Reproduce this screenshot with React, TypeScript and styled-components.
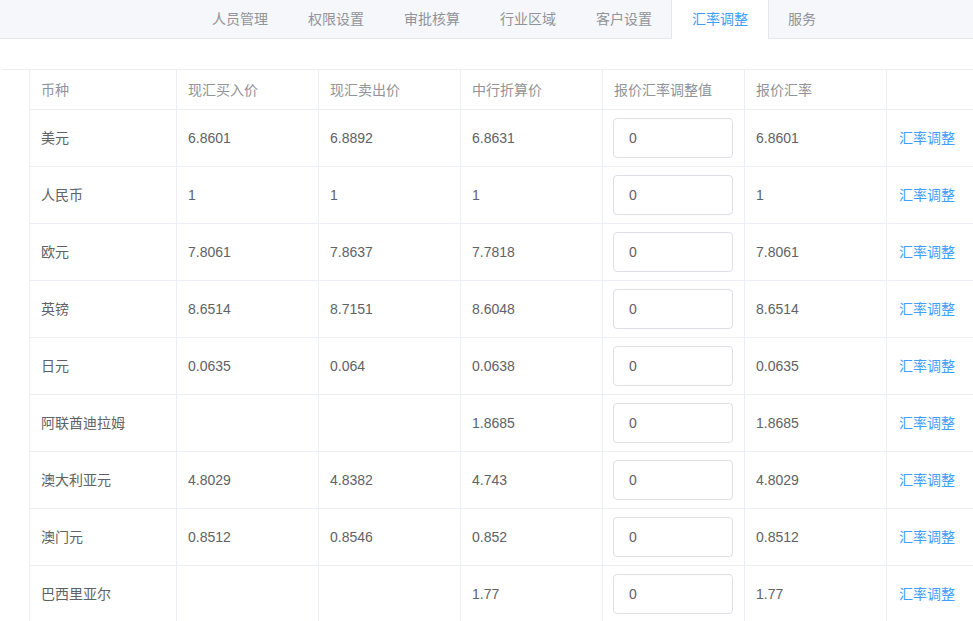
import React from 'react';
import styled, { createGlobalStyle } from 'styled-components';

type Rate = {
  name: string;
  buy: string;
  sell: string;
  middle: string;
  quote: string;
};

const tabs = ['人员管理', '权限设置', '审批核算', '行业区域', '客户设置', '汇率调整', '服务'];
const activeTab = '汇率调整';

const headers = ['币种', '现汇买入价', '现汇卖出价', '中行折算价', '报价汇率调整值', '报价汇率', ''];

const rates: Rate[] = [
  { name: '美元', buy: '6.8601', sell: '6.8892', middle: '6.8631', quote: '6.8601' },
  { name: '人民币', buy: '1', sell: '1', middle: '1', quote: '1' },
  { name: '欧元', buy: '7.8061', sell: '7.8637', middle: '7.7818', quote: '7.8061' },
  { name: '英镑', buy: '8.6514', sell: '8.7151', middle: '8.6048', quote: '8.6514' },
  { name: '日元', buy: '0.0635', sell: '0.064', middle: '0.0638', quote: '0.0635' },
  { name: '阿联酋迪拉姆', buy: '', sell: '', middle: '1.8685', quote: '1.8685' },
  { name: '澳大利亚元', buy: '4.8029', sell: '4.8382', middle: '4.743', quote: '4.8029' },
  { name: '澳门元', buy: '0.8512', sell: '0.8546', middle: '0.852', quote: '0.8512' },
  { name: '巴西里亚尔', buy: '', sell: '', middle: '1.77', quote: '1.77' },
];

const App = () => {
  function adjustRate(name: string) {
    console.log('adjust rate for', name);
  }

  return (
    <>
      <GlobalStyle />
      <Page>
        <TabBar>
          {tabs.map((tab) => (
            <Tab key={tab} $active={tab === activeTab}>
              {tab}
            </Tab>
          ))}
        </TabBar>
        <Content>
          <Table>
            <HeaderRow>
              {headers.map((h, i) => (
                <HeaderCell key={i}>{h}</HeaderCell>
              ))}
            </HeaderRow>
            {rates.map((r) => (
              <BodyRow key={r.name}>
                <Cell>{r.name}</Cell>
                <Cell>{r.buy}</Cell>
                <Cell>{r.sell}</Cell>
                <Cell>{r.middle}</Cell>
                <InputCell>
                  <RateInput defaultValue="0" />
                </InputCell>
                <Cell>{r.quote}</Cell>
                <Cell>
                  <LinkBtn onClick={() => adjustRate(r.name)}>汇率调整</LinkBtn>
                </Cell>
              </BodyRow>
            ))}
          </Table>
        </Content>
      </Page>
    </>
  );
};

const GlobalStyle = createGlobalStyle`
  html, body {
    margin: 0;
    padding: 0;
    background: #fff;
    overflow: hidden;
  }
  body {
    font-family: "Liberation Sans", "Noto Sans CJK SC", sans-serif;
    font-size: 14px;
    line-height: 20px;
  }
`;

const Page = styled.div`
  width: 973px;
  height: 621px;
  overflow: hidden;
`;

const TabBar = styled.div`
  display: flex;
  height: 38px;
  padding-left: 192px;
  background-color: #f5f7fa;
  border-bottom: 1px solid #e4e7ed;
`;

const Tab = styled.div<{ $active?: boolean }>`
  display: flex;
  align-items: center;
  height: ${(p) => (p.$active ? '39px' : '38px')};
  padding: ${(p) => (p.$active ? '0 20px 1px' : '0 20px')};
  font-size: 14px;
  color: ${(p) => (p.$active ? '#409eff' : '#909399')};
  background-color: ${(p) => (p.$active ? '#fff' : 'transparent')};
  border-left: ${(p) => (p.$active ? '1px solid #e4e7ed' : 'none')};
  border-right: ${(p) => (p.$active ? '1px solid #e4e7ed' : 'none')};
  margin: ${(p) => (p.$active ? '0 -1px' : '0')};
  box-sizing: border-box;
  white-space: nowrap;
  cursor: pointer;
`;

const Content = styled.div`
  margin-top: 30px;
  margin-left: 2px;
  border-top: 1px solid #ebeef5;
`;

const Table = styled.div`
  margin-left: 27px;
  width: 1000px;
`;

const HeaderRow = styled.div`
  display: grid;
  grid-template-columns: 147px 142px 142px 142px 142px 142px 1fr;
  height: 40px;
  box-sizing: border-box;
  border-bottom: 1px solid #ebeef5;
`;

const BodyRow = styled(HeaderRow)`
  height: 57px;
`;

const Cell = styled.div`
  display: flex;
  align-items: center;
  padding: 0 11px;
  border-left: 1px solid #ebeef5;
  color: #606266;
  font-size: 14px;
  white-space: nowrap;
  overflow: hidden;
`;

const HeaderCell = styled(Cell)`
  color: #909399;
`;

const InputCell = styled(Cell)`
  padding: 0 10px;
`;

const RateInput = styled.input`
  width: 120px;
  height: 40px;
  box-sizing: border-box;
  padding: 0 15px;
  border: 1px solid #dcdfe6;
  border-radius: 4px;
  color: #606266;
  font-family: "Liberation Sans", "Noto Sans CJK SC", sans-serif;
  font-size: 14px;
  outline: none;
`;

const LinkBtn = styled.button`
  padding: 0 0 0 1px;
  border: none;
  background: none;
  color: #409eff;
  font-family: "Liberation Sans", "Noto Sans CJK SC", sans-serif;
  font-size: 14px;
  line-height: 20px;
  cursor: pointer;
`;

export default App;
